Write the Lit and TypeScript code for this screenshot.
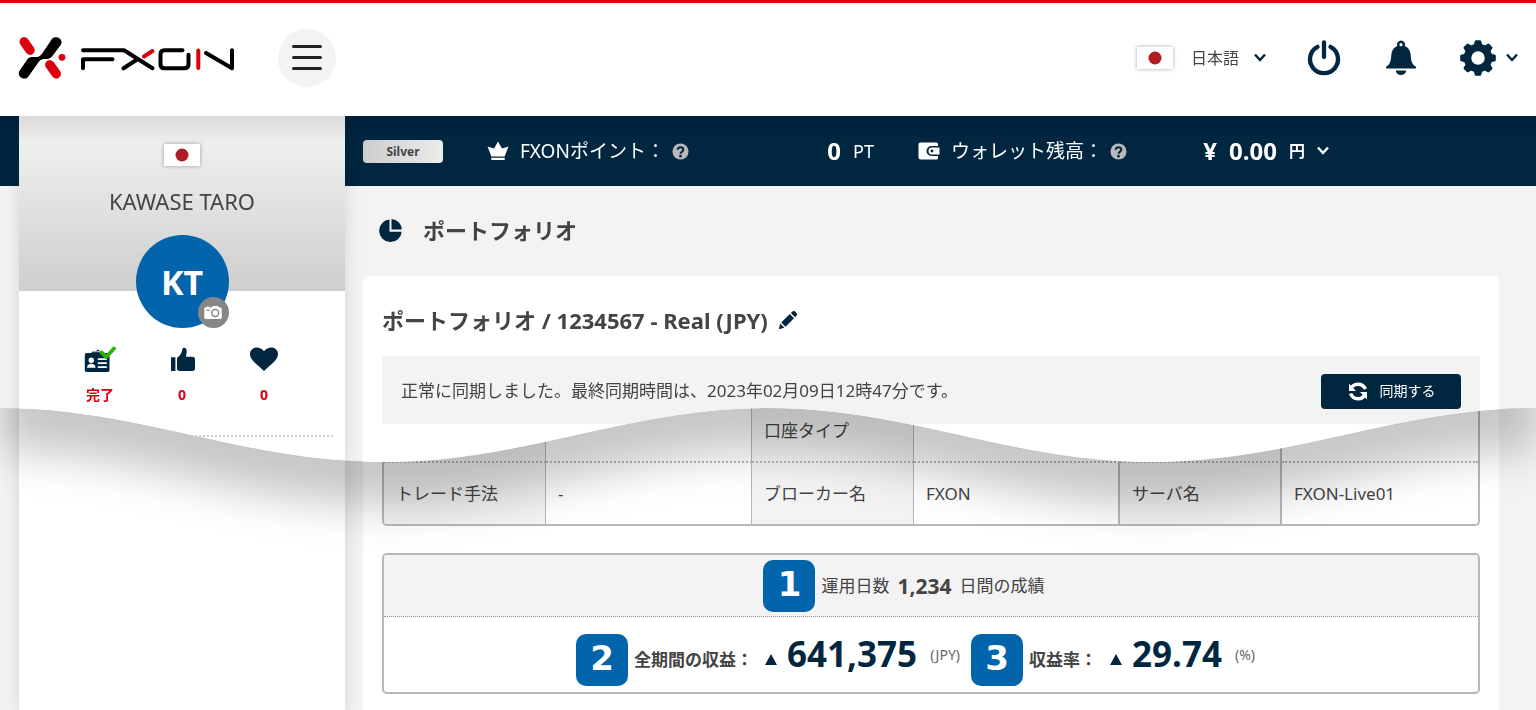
import { LitElement, html, css, svg } from "lit";
import { customElement } from "lit/decorators.js";

const chevron = html`<svg class="chevron" viewBox="0 0 12 10" aria-hidden="true">
  <path d="M1 1.5 6 7l5-5.5" fill="none" stroke="currentColor" stroke-width="2.4" />
</svg>`;

const help = html`<svg class="help" viewBox="0 0 18 18" aria-hidden="true">
  <circle cx="9" cy="9" r="8.5" fill="#b9b9b9" />
  <path d="M6 7.2C6 3.6 12.2 3.6 12 7.2c0 1.9-2.9 1.9-2.9 4.2" fill="none" stroke="#002640" stroke-width="2.2" />
  <circle cx="9" cy="13.9" r="1.4" fill="#002640" />
</svg>`;

const flag = html`<svg class="flag" viewBox="0 0 36 22" role="img" aria-label="日本">
  <rect width="36" height="22" fill="#fff" />
  <circle cx="18" cy="11" r="6.5" fill="#af1c22" />
</svg>`;

const logo = html`<svg class="logo" viewBox="0 0 218 44" role="img" aria-label="FXON">
  <g fill="none" stroke="#db000f" stroke-width="9.4" stroke-linecap="round">
    <path d="M6.2 5.8 12 14.2" />
    <path d="M31.8 28.800 38.200 37.800" />
  </g>
  <path d="M33.8 3.2C35.8-.4 44.6 1 43.4 7.2c-.2 1.2-.9 2-1.5 2.9L34 20.4c-1.5 2-3.7 2.6-7 2.6-4.500 0-5.700 2-7 4.100L10.400 40.400C7.600 44.600.3 42.300.8 36.600c.1-1 .6-1.800 1.200-2.700L9.600 23c1.200-1.500 3-2 5.400-2 4 0 6.400.5 9-3.300z" fill="#000" />
  <circle cx="44" cy="21.300" r="3.400" fill="#db000f" />
  <g fill="none" stroke="#000" stroke-width="4" stroke-linecap="round" stroke-linejoin="round">
    <path d="M65 14.300h41l28.500 18M65 32.300v-9h29.500M105.500 32.300l14-9" />
    <path d="M164.500 14.300h-18q-4 0-4 4v10q0 4 4 4h20q4 0 4-4v-9.500" />
    <path d="M188 17l26 15.300V14.300" />
  </g>
  <path d="M126 20.500 134.500 15M180.300 14.500v17.500" stroke="#db000f" stroke-width="4" stroke-linecap="round" />
</svg>`;

const gear = html`<svg class="icon" viewBox="0 0 36 36" aria-hidden="true">
  <circle cx="18" cy="18" r="10.500" fill="none" stroke="currentColor" stroke-width="7.500" />
  ${[0, 45, 90, 135, 180, 225, 270, 315].map(
    (a) => svg`<path d="M13.500 6 14.800.9Q15 .2 16 .2h4q1 0 1.200.7L22.500 6z" fill="currentColor" transform="rotate(${a} 18 18)" />`
  )}
</svg>`;

const power = html`<svg class="icon" viewBox="0 0 36 36" aria-hidden="true">
  <path d="M11.500 6.800a14 14 0 1 0 13 0M18 2.500V17" fill="none" stroke="currentColor" stroke-width="4.300" stroke-linecap="round" />
</svg>`;

const bell = html`<svg class="icon" viewBox="0 0 36 36" aria-hidden="true">
  <path fill-rule="evenodd" d="M18 .6a4 4 0 0 1 3.800 5.300c3.900 1.700 5.700 5 5.900 9.100.3 6.500 1.400 9.200 5 11.600.6.500.5 2-.6 2H3.900c-1.100 0-1.200-1.500-.6-2 3.600-2.400 4.700-5.100 5-11.600.2-4.100 2-7.400 5.900-9.100A4 4 0 0 1 18 .6zm0 2.500a1.600 1.600 0 1 0 0 3.200 1.600 1.600 0 0 0 0-3.200zM12.800 30.500h10.400c-.6 6-9.800 6-10.400 0z" fill="currentColor" />
</svg>`;

@customElement("app-root")
export class AppRoot extends LitElement {
  static styles = css`
    :host {
      display: block;
      color: #444;
      background: #f3f3f3;
      font-family: "Noto Sans", "Noto Sans CJK JP", sans-serif;
      font-size: 16px;
      line-height: 24px;
    }
    * { box-sizing: border-box; }
    button, select {
      font: inherit;
      color: inherit;
      background: none;
      border: 0;
      padding: 0;
      margin: 0;
      appearance: none;
      cursor: pointer;
    }
    h1, h2, p { margin: 0; }
    svg { display: block; flex: none; }
    .defs { position: absolute; width: 0; height: 0; }

    .stage { display: grid; min-height: 100vh; overflow: hidden; }
    .lower, .upper { grid-area: 1 / 1; min-width: 0; }
    .upper { align-self: start; filter: drop-shadow(0 43px 22px rgba(0, 0, 0, 0.22)); }
    .sheet { clip-path: url(#wave); background: #f3f3f3; }

    header {
      position: relative;
      z-index: 1;
      display: flex;
      align-items: center;
      height: 116px;
      padding: 0 18px 4px;
      border-top: 3px solid #db000f;
      background: #fff;
    }
    .logo { width: 218px; height: 44px; }
    .menu {
      display: grid;
      place-content: center;
      gap: 8px;
      width: 58px;
      height: 58px;
      margin-left: 42px;
      border-radius: 50%;
      background: #f3f3f3;
    }
    .menu span { width: 30px; height: 3px; border-radius: 2px; background: #222; }
    .flag { width: 36px; height: 22px; box-shadow: 0 0 4px rgba(0, 0, 0, 0.35); }
    .tools { display: flex; align-items: center; margin-left: auto; color: #002640; }
    .language { display: flex; align-items: center; gap: 13px; margin: 0 40px 0 18px; }
    .language select { width: 50px; color: #444; }
    .icon { width: 36px; height: 36px; }
    .tools > button { display: flex; align-items: center; gap: 10px; }
    .tools > button + button { margin-left: 41px; }
    .chevron { width: 12px; height: 10px; }

    .columns { display: grid; grid-template-columns: 19px 326px minmax(0, 1fr); }
    .lower.columns { grid-template-rows: 1fr; }
    .side {
      grid-column: 2;
      background: #fff;
      box-shadow: 0 0 16px rgba(0, 0, 0, 0.13);
    }
    .upper .side { grid-row: 1 / 3; }
    .bar {
      grid-column: 1 / 4;
      grid-row: 1;
      display: flex;
      align-items: center;
      height: 70px;
      padding-left: 363px;
      color: #fff;
      font-size: 19px;
      background: linear-gradient(#00203a, #002640 18px);
    }
    .rank {
      width: 80px;
      height: 23px;
      margin-right: 44px;
      border-radius: 4px;
      text-align: center;
      font-size: 12px;
      font-weight: 700;
      line-height: 23px;
      color: #444;
      background: linear-gradient(90deg, #cdcdcd, #ececec);
    }
    .balance { display: flex; align-items: center; gap: 11px; white-space: nowrap; }
    .points { width: 387px; margin-right: 44px; }
    .wallet { width: 411px; }
    .balance .help { width: 17px; height: 17px; margin-left: -4px; }
    .glyph { width: 22px; height: 20px; }
    .amount { display: flex; align-items: center; gap: 12px; margin-left: auto; }
    .amount strong { font-size: 24px; }
    .amount small { font-size: 18px; }
    .amount .yen { font-size: 16px; font-weight: 700; }

    .profile {
      display: flex;
      flex-direction: column;
      align-items: center;
      height: 175px;
      padding-top: 28px;
      background: linear-gradient(#dadada, #efefef 28px, #cecece);
    }
    .name { margin: 23px 0 22px; font-size: 22px; }
    .avatar {
      position: relative;
      flex: none;
      display: grid;
      place-content: center;
      width: 93px;
      height: 93px;
      border-radius: 50%;
      font-size: 34px;
      font-weight: 700;
      color: #fff;
      background: #0264aa;
    }
    .camera {
      position: absolute;
      right: 0;
      bottom: 0;
      display: grid;
      place-content: center;
      width: 31px;
      height: 31px;
      border-radius: 50%;
      background: #868686;
    }
    .camera svg { width: 18px; height: 16px; }
    .status {
      display: grid;
      grid-template-columns: repeat(3, 82px);
      justify-content: center;
      margin: 0 12px;
      padding: 54px 0 28px;
      border-bottom: 2px dotted #ccc;
      color: #db000f;
      font-size: 14px;
      font-weight: 700;
    }
    .status div { display: grid; justify-items: center; gap: 10px; }
    .status svg { width: 32px; height: 28px; }

    .content { grid-column: 3; padding: 0 37px 0 18px; }
    .heading { display: flex; align-items: center; gap: 20px; height: 90px; padding: 0 0 2px 15px; }
    h1, h2 { font-size: 22px; line-height: 32px; }
    .heading svg { width: 25px; height: 25px; }
    .card { padding: 0 19px 38px; border-radius: 6px 6px 0 0; background: #fff; }
    .title { display: flex; align-items: center; gap: 10px; height: 80px; padding-top: 8px; }
    .title svg { width: 20px; height: 20px; }
    .notice {
      display: flex;
      align-items: center;
      justify-content: space-between;
      height: 68px;
      padding: 2px 19px 0;
      border-radius: 4px 4px 0 0;
      font-size: 17px;
      background: #f3f3f3;
    }
    .sync {
      display: flex;
      align-items: center;
      justify-content: center;
      gap: 11px;
      width: 140px;
      height: 35px;
      border-radius: 4px;
      color: #fff;
      font-size: 14px;
      background: #002640;
    }
    .sync svg { width: 22px; height: 22px; }

    .lower .card { min-height: 100%; padding-top: 401px; padding-bottom: 18px; }
    table {
      width: 100%;
      table-layout: fixed;
      border: 2px solid #b7b7b7;
      border-radius: 5px;
      border-spacing: 0;
      overflow: hidden;
    }
    .account { border-top: 0; border-radius: 0 0 5px 5px; font-size: 17px; }
    .account th, .account td {
      width: 206px;
      height: 61px;
      padding: 0 12px;
      text-align: left;
      font-weight: 400;
      border-right: 1px solid #b7b7b7;
    }
    .account th { width: 162px; }
    .account tr > :last-child { width: auto; border-right: 0; }
    .account tr:first-child > * { height: 62px; border-bottom: 2px dotted #b7b7b7; }
    .account .strong { border-right-width: 2px; }
    th { background: #f3f3f3; }
    .result { margin-top: 27px; }
    .result th { height: 62px; padding: 0 54px 0 0; font-weight: 400; border-bottom: 1px dotted #999; }
    .result td { height: 75px; padding: 10px 20px 0 0; }
    .line { display: flex; align-items: center; justify-content: center; font-size: 17px; white-space: nowrap; }
    .line strong { margin: 0 8px; font-size: 21px; }
    .step {
      width: 52px;
      height: 52px;
      margin-right: 6px;
      border-radius: 10px;
      text-align: center;
      font: 700 34px/48px "DejaVu Sans", sans-serif;
      color: #fff;
      background: #0264aa;
    }
    .label { width: 131px; font-weight: 700; }
    .label.short { width: 81px; }
    .up { width: 12px; height: 11px; }
    .line .figure { margin: 0 13px 12px 10px; font-size: 35px; line-height: 44px; color: #002640; }
    .unit { margin: 0 11px 10px 0; font-size: 14px; color: #666; }
  `;

  render() {
    return html`
      <svg class="defs" aria-hidden="true">
        <clipPath id="wave" clipPathUnits="objectBoundingBox">
          <path d="M0 0H1V.8831C.909 .8831 .841 1 .75 1S.591 .8831 .5 .8831S.341 1 .25 1S.091 .8831 0 .8831Z" />
        </clipPath>
      </svg>
      <div class="stage" lang="ja">
        <div class="lower columns">
          <div class="side"></div>
          <div class="content">
            <div class="card">
              <table class="account">
                <tr>
                  <th></th><td></td><th scope="row">口座タイプ</th><td class="strong"></td><th class="strong"></th><td></td>
                </tr>
                <tr>
                  <th scope="row">トレード手法</th><td>-</td>
                  <th scope="row">ブローカー名</th><td class="strong">FXON</td>
                  <th scope="row" class="strong">サーバ名</th><td>FXON-Live01</td>
                </tr>
              </table>
              <table class="result">
                <tr>
                  <th>
                    <div class="line"><span class="step">1</span>運用日数<strong>1,234</strong>日間の成績</div>
                  </th>
                </tr>
                <tr>
                  <td>
                    <div class="line">
                      <span class="step">2</span>
                      <span class="label">全期間の収益：</span>
                      ${this.up()}<strong class="figure">641,375</strong><span class="unit">(JPY)</span>
                      <span class="step">3</span>
                      <span class="label short">収益率：</span>
                      ${this.up()}<strong class="figure">29.74</strong><span class="unit">(%)</span>
                    </div>
                  </td>
                </tr>
              </table>
            </div>
          </div>
        </div>

        <div class="upper">
          <div class="sheet">
            <header>
              ${logo}
              <button class="menu" aria-label="メニュー"><span></span><span></span><span></span></button>
              <div class="tools">
                ${flag}
                <label class="language">
                  <select aria-label="言語"><option>日本語</option></select>
                  ${chevron}
                </label>
                <button aria-label="ログアウト">${power}</button>
                <button aria-label="通知">${bell}</button>
                <button aria-label="設定">${gear}${chevron}</button>
              </div>
            </header>
            <div class="columns">
              <div class="bar">
                <span class="rank">Silver</span>
                <div class="balance points">
                  <svg class="glyph" viewBox="0 0 22 20" aria-hidden="true">
                    <path d="M11 .5 15 7.500 21.500 5.500 17.600 15.500H4.400L.5 5.500 7 7.500zM4.300 16.800h13.400V19H4.300z" fill="#fff" />
                  </svg>
                  <span>FXONポイント：</span>${help}
                  <span class="amount"><strong>0</strong><small>PT</small></span>
                </div>
                <div class="balance wallet">
                  <svg class="glyph" viewBox="0 0 22 20" aria-hidden="true">
                    <path d="M2.500 1.500h16q1.500 0 1.500 1.500v2h-6.500a5 5 0 0 0 0 10H20v2q0 1.500-1.500 1.500h-16Q.5 18.500.5 16.500v-13q0-2 2-2z" fill="#fff" />
                    <path d="M14 6.500h7.500v7H14a3.500 3.500 0 0 1 0-7z" fill="#fff" />
                    <circle cx="14" cy="10" r="1.400" fill="#002640" />
                  </svg>
                  <span>ウォレット残高：</span>${help}
                  <button class="amount"><strong>¥</strong><strong>0.00</strong><span class="yen">円</span>${chevron}</button>
                </div>
              </div>
              <div class="side">
                <div class="profile">
                  ${flag}
                  <p class="name">KAWASE TARO</p>
                  <div class="avatar">
                    KT
                    <button class="camera" aria-label="写真を変更">
                      <svg viewBox="0 0 18 16" aria-hidden="true">
                        <path d="M1.500 2.500h1V1.600h3v.9h2L9 1h5l1.500 1.500h1q1.200 0 1.200 1.200v9q0 1.300-1.200 1.300h-15Q.3 14 .3 12.700v-9q0-1.200 1.200-1.200z" fill="#fff" />
                        <circle cx="11.200" cy="8" r="3.500" fill="none" stroke="#868686" stroke-width="1.400" />
                        <path d="M2.300 5.200h3.500" stroke="#868686" stroke-width="1.200" />
                      </svg>
                    </button>
                  </div>
                </div>
                <div class="status">
                  <div>
                    <svg viewBox="0 0 32 28" aria-hidden="true">
                      <path d="M2.500 8h4.800l.8-2h4.200q1.200-2.500 3.400 0h3l1 2h4.100q1.700 0 1.700 1.700v15.600q0 1.700-1.700 1.700H2.500Q.8 27 .8 25.300V9.700Q.8 8 2.500 8z" fill="#002640" />
                      <path d="M5 6.700h15" stroke="#fff" stroke-width=".8" />
                      <circle cx="7.300" cy="15.200" r="2.700" fill="#fff" />
                      <path d="M3 22.800c0-5.500 8.600-5.500 8.600 0zM13.800 13.200h9v1.900h-9zM13.800 17.200h9v1.900h-9zM13.800 21.200h9v1.900h-9z" fill="#fff" />
                      <path d="M17.500 7.500 22.300 12 30 3.500" fill="none" stroke="#2fb010" stroke-width="3.800" stroke-linecap="round" stroke-linejoin="round" />
                    </svg>
                    <span>完了</span>
                  </div>
                  <div>
                    <svg viewBox="0 0 32 28" aria-hidden="true">
                      <path d="M5 12.200h4.400V26H5zM11 13c3.300-2.500 5-5.400 5.300-8.200C16.700 1.400 21.600 2.400 20.600 7.400L20 11.800h6.300q2.700 0 2.700 2.700v8.800q0 2.700-2.700 2.700H13.700q-2.700 0-2.700-2.700z" fill="#002640" />
                    </svg>
                    <span>0</span>
                  </div>
                  <div>
                    <svg viewBox="0 0 32 28" aria-hidden="true">
                      <path d="M16 26C9 19.500 2 14.800 2 9.300 2 1.500 11.500.3 16 6.200 20.500.3 30 1.500 30 9.300 30 14.800 23 19.500 16 26z" fill="#002640" />
                    </svg>
                    <span>0</span>
                  </div>
                </div>
              </div>
              <div class="content">
                <div class="heading">
                  <svg viewBox="0 0 25 25" aria-hidden="true">
                    <path d="M11.500 1.500V13.700H23.700A11.300 11.300 0 1 1 11.500 1.500z" fill="#002640" />
                    <path d="M13.500 1A11 11 0 0 1 23.800 11.600H13.500z" fill="#002640" />
                  </svg>
                  <h1>ポートフォリオ</h1>
                </div>
                <div class="card">
                  <div class="title">
                    <h2>ポートフォリオ / 1234567 - Real (JPY)</h2>
                    <button aria-label="編集">
                      <svg viewBox="0 0 20 20" aria-hidden="true">
                        <path d="M.8 19.200 2.200 13.600 6.400 17.800zM3.200 12.400 11.800 4 16 8.200 7.500 16.700zM12.800 3 14.800 1.200q1-.9 2 0l2 2q.9 1 0 2L17 7.200z" fill="#002640" />
                      </svg>
                    </button>
                  </div>
                  <div class="notice">
                    <p>正常に同期しました。最終同期時間は、2023年02月09日12時47分です。</p>
                    <button class="sync">
                      <svg viewBox="0 0 22 22" aria-hidden="true">
                        <path d="M3.600 9.500A8 8 0 0 1 18.400 9M18.400 14A8 8 0 0 1 3.600 13.500" fill="none" stroke="#fff" stroke-width="3.500" />
                        <path d="M2 3.500v7.500h7zM20 19.500V12h-7z" fill="#fff" />
                      </svg>
                      同期する
                    </button>
                  </div>
                </div>
              </div>
            </div>
          </div>
        </div>
      </div>
    `;
  }

  private up() {
    return html`<svg class="up" viewBox="0 0 12 11" aria-hidden="true"><path d="M6 0 12 11H0z" fill="#002640" /></svg>`;
  }
}
